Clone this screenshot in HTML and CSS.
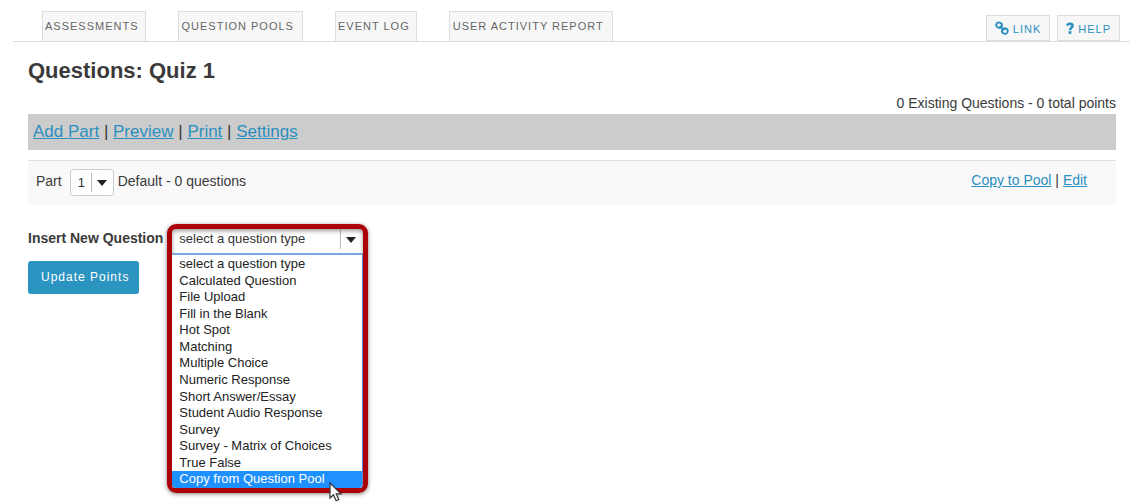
FILE: index.html
```html
<!DOCTYPE html>
<html lang="en">
<head>
<meta charset="utf-8">
<meta name="viewport" content="width=device-width, initial-scale=1">
<title>Questions: Quiz 1</title>
<link rel="stylesheet" href="styles.css">
</head>
<body>
<header class="topbar">
  <nav class="tabs">
    <a class="tab" href="#">ASSESSMENTS</a>
    <a class="tab tab-wide" href="#">QUESTION POOLS</a>
    <a class="tab" href="#">EVENT LOG</a>
    <a class="tab tab-wide" href="#">USER ACTIVITY REPORT</a>
  </nav>
  <div class="tools">
    <a class="tool" href="#">
      <svg class="tool-icon" width="14" height="14" viewBox="0 0 14 14" fill="none" stroke="currentColor" stroke-width="1.900" aria-hidden="true"><rect x="1.300" y="1.500" width="5.600" height="5.200" rx="2.400" transform="rotate(20 4 4)"/><rect x="7.100" y="7.500" width="5.600" height="5.200" rx="2.400" transform="rotate(20 10 10)"/><path d="M4.800 5l4.500 4.200"/></svg>
      <span>LINK</span>
    </a>
    <a class="tool" href="#">
      <svg class="tool-icon" width="8" height="14" viewBox="0 0 8 14" fill="none" stroke="currentColor" aria-hidden="true"><path d="M1.200 4.700C1.600 3.300 2.500 2.700 3.900 2.700c1.600 0 2.700.800 2.700 2 0 1.900-2.600 2-2.600 4.500" stroke-width="2.600"/><path d="M4 10.200v2.600" stroke-width="2.800"/></svg>
      <span>HELP</span>
    </a>
  </div>
</header>
<main class="content">
  <h1 class="title">Questions: Quiz 1</h1>
  <p class="summary">0 Existing Questions - 0 total points</p>
  <nav class="actions">
    <a href="#">Add Part</a> | <a href="#">Preview</a> | <a href="#">Print</a> | <a href="#">Settings</a>
  </nav>
  <section class="part">
    <label for="part-number">Part</label>
    <div class="picker picker-small">
      <select id="part-number"><option>1</option></select>
    </div>
    <span class="part-name">Default - 0 questions</span>
    <div class="part-links"><a href="#">Copy to Pool</a> | <a href="#">Edit</a></div>
  </section>
  <div class="insert">
    <label class="insert-label" for="question-type">Insert New Question</label>
    <div class="type-box">
      <div class="picker picker-type">
        <select id="question-type"><option>select a question type</option></select>
      </div>
      <div class="menu-frame">
        <ul class="menu" role="listbox" aria-label="Question type">
          <li role="option">select a question type</li>
          <li role="option">Calculated Question</li>
          <li role="option">File Upload</li>
          <li role="option">Fill in the Blank</li>
          <li role="option">Hot Spot</li>
          <li role="option">Matching</li>
          <li role="option">Multiple Choice</li>
          <li role="option">Numeric Response</li>
          <li role="option">Short Answer/Essay</li>
          <li role="option">Student Audio Response</li>
          <li role="option">Survey</li>
          <li role="option">Survey - Matrix of Choices</li>
          <li role="option">True False</li>
          <li role="option" class="active" aria-selected="true">Copy from Question Pool</li>
        </ul>
        <svg class="cursor" width="13" height="20" viewBox="0 0 13 20" aria-hidden="true"><path d="M1 1v15l3.500-3.300 2.600 6 2.700-1.200-2.600-5.700H12z" fill="#fff" stroke="#333" stroke-width="1.200"/></svg>
      </div>
    </div>
  </div>
  <button class="update" type="button">Update Points</button>
</main>
</body>
</html>
```

FILE: styles.css
```css
* {
  box-sizing: border-box;
}

body {
  min-height: 100vh;
  margin: 0;
  background: #fff;
  color: #3a3a3a;
  font-family: "Liberation Sans", Arial, sans-serif;
  font-size: 14px;
  line-height: 20px;
}

a {
  color: #2b8fc0;
}

.topbar {
  display: flex;
  justify-content: space-between;
  align-items: flex-end;
  margin: 0 6px 0 13px;
  padding: 11px 10px 0 29px;
  border-bottom: 1px solid #ddd;
}

.tabs {
  display: flex;
  gap: 32px;
}

.tab,
.tool {
  border: 1px solid #ddd;
  background: #f7f7f7;
  font-size: 11px;
  letter-spacing: 1px;
  text-decoration: none;
}

.tab {
  padding: 4px 6px 5px 2px;
  border-bottom: 0;
  color: #666;
}

.tab-wide {
  padding-left: 3px;
  padding-right: 8px;
}

.tools {
  display: flex;
  gap: 7px;
}

.tool {
  display: flex;
  gap: 4px;
  height: 26px;
  padding: 3px 8px 0;
  color: #2b8fc0;
}

.tool-icon {
  margin-top: 2px;
}

.content {
  padding: 0 20px 0 28px;
}

.title {
  margin: 0;
  padding-top: 14px;
  font-size: 22px;
  line-height: 30px;
}

.summary {
  margin: 7px 0 1px;
  text-align: right;
}

.actions {
  margin-bottom: 10px;
  padding: 8px 5px;
  background: #ccc;
  font-size: 17px;
}

.part {
  display: flex;
  align-items: flex-start;
  padding: 8px 29px 9px 8px;
  border-top: 1px solid #ddd;
  background: #f9f9f9;
  line-height: 24px;
}

.picker {
  position: relative;
}

.picker select {
  width: 100%;
  appearance: none;
  border: 1px solid #ccc;
  border-radius: 3px;
  background: #fff;
  color: #333;
  font-family: inherit;
  font-size: 13px;
}

.picker::before {
  content: "";
  position: absolute;
  top: 4px;
  bottom: 4px;
  right: 22px;
  border-left: 1px solid #bbb;
}

.picker::after {
  content: "";
  position: absolute;
  top: 11px;
  right: 7px;
  border: 5px solid transparent;
  border-top: 6px solid #222;
  border-bottom: 0;
}

.picker-small {
  width: 44px;
  margin: 0 4px 0 8px;
}

.picker-small select {
  display: block;
  height: 27px;
  padding: 0 7px 1px;
}

.part-links {
  margin-left: auto;
  line-height: 22px;
}

.insert {
  display: flex;
  align-items: flex-start;
  margin-top: 19px;
}

.insert-label {
  padding-top: 4px;
  font-weight: bold;
}

.type-box {
  position: relative;
  width: 201px;
  height: 30px;
  margin-left: 4px;
}

.picker-type {
  padding: 0 5px;
}

.picker-type select {
  display: block;
  height: 29px;
  padding: 0 7px;
  border: 0;
}

.picker-type::before {
  top: 6px;
  right: 27px;
}

.picker-type::after {
  top: 13px;
  right: 12px;
}

.menu-frame {
  position: absolute;
  z-index: 1;
  top: 0;
  left: 0;
  width: 100%;
  padding-top: 24px;
  border: 5px solid #ac0009;
  border-radius: 9px;
  box-shadow: 0 1px 4px rgba(0, 0, 0, 0.5), inset 0 2px 4px rgba(0, 0, 0, 0.4);
}

.menu {
  display: grid;
  grid-auto-rows: 1fr;
  height: 235px;
  margin: 0;
  padding: 1px 0 0;
  border-top: 2px solid #7ba7e1;
  border-right: 1px solid #5b86c9;
  border-radius: 0 0 4px 4px;
  overflow: hidden;
  background: #fff;
  color: #222;
  font-size: 13px;
  line-height: 16px;
  list-style: none;
}

.menu li {
  padding-left: 7px;
}

.menu .active {
  background: #1e90ff;
  color: #fff;
}

.cursor {
  position: absolute;
  right: 21px;
  bottom: -14px;
}

.update {
  margin-top: 7px;
  padding: 6px 10px 7px 13px;
  border: 0;
  border-radius: 3px;
  background: #2b94c1;
  color: #fff;
  font-family: inherit;
  font-size: 12px;
  letter-spacing: 1px;
  line-height: 20px;
}
```
